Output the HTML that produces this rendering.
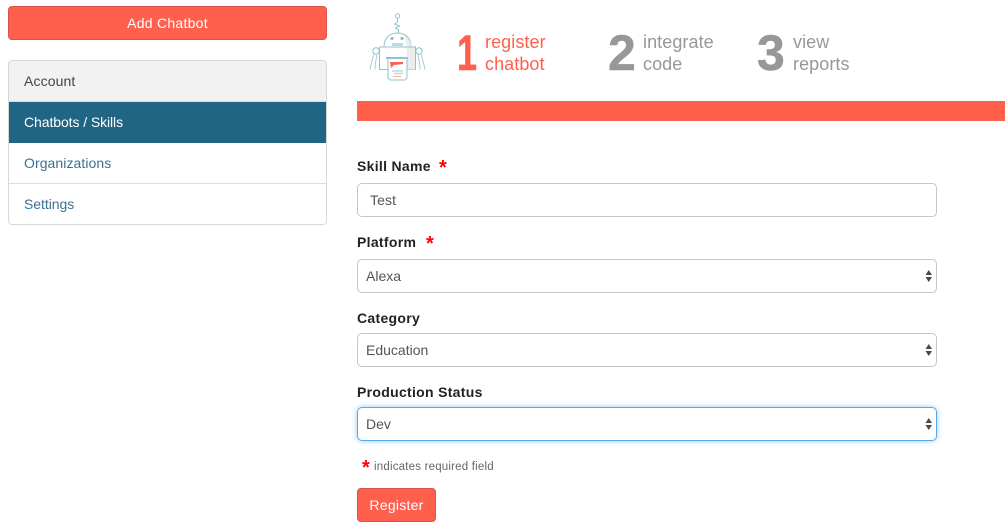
<!DOCTYPE html>
<html><head><meta charset="utf-8"><style>
html,body{margin:0;padding:0;background:#fff;width:1005px;height:531px;overflow:hidden}
body{position:relative;font-family:"Liberation Sans",sans-serif;font-size:14px;color:#333}
.a{position:absolute;white-space:nowrap;box-sizing:border-box}
.t{line-height:20px;height:20px}
.l{font-weight:bold;color:#222;letter-spacing:.3px}
.r{color:#f00;font-weight:bold;font-size:20px;line-height:20px}
.f{left:357px;width:580px;height:34px;border:1px solid #c6c6c6;border-radius:5px;background:#fff;padding-left:8px;line-height:32px;color:#555}
.n{font-weight:bold;font-size:50px;line-height:50px;color:#979797;-webkit-text-stroke:.5px currentColor}
.w{font-size:18px;line-height:21.5px;color:#979797;white-space:pre;letter-spacing:.08px}
</style></head><body>
<div class="a" style="left:8px;top:6px;width:319px;height:34px;background:#ff5f4d;border:1px solid #d9534a;border-radius:4px;color:#fff;text-align:center;line-height:32px;letter-spacing:.27px">Add Chatbot</div>
<div class="a" style="left:8px;top:60px;width:319px;height:165px;border:1px solid #d8d8d8;border-radius:4px;overflow:hidden;background:#fff">
<div class="a" style="left:0;top:0;width:317px;height:41px;background:#f2f2f2;border-bottom:1px solid #ddd;padding-left:15px;line-height:40px;color:#444;letter-spacing:.12px">Account</div>
<div class="a" style="left:0;top:41px;width:317px;height:41px;background:#206584;padding-left:15px;line-height:41px;color:#fff;letter-spacing:-.08px">Chatbots / Skills</div>
<div class="a" style="left:0;top:82px;width:317px;height:41px;border-bottom:1px solid #ddd;padding-left:15px;line-height:40px;color:#3a7291;letter-spacing:.07px">Organizations</div>
<div class="a" style="left:0;top:123px;width:317px;height:40px;padding-left:15px;line-height:40px;color:#3a7291;letter-spacing:-.05px">Settings</div>
</div>
<svg class="a" style="left:357px;top:0" width="90" height="90" viewBox="0 0 90 90" fill="none" stroke="#8fc3cf" stroke-width="1">
<circle cx="40.500" cy="16" r="2.200"/>
<path d="M40.500 18v4l-3 2 5 2-4 2 3 2v3"/>
<path d="M27 47c0-9 5.500-14 13.500-14S54 38 54 47z" fill="#fff"/>
<path d="M47 35c4 2 7 6 7 12h-4z" fill="#ececec" stroke="none"/>
<circle cx="35" cy="38.500" r="1.500" fill="#7fb6c4" stroke="none"/>
<circle cx="45" cy="38.500" r="1.500" fill="#7fb6c4" stroke="none"/>
<rect x="35" y="43" width="11" height="3" fill="#bcdbe2" stroke="none"/>
<rect x="22.500" y="47" width="36" height="22.500" fill="#fff"/>
<rect x="50" y="47.500" width="8" height="22" fill="#ececec" stroke="none"/>
<circle cx="19" cy="51" r="3.200" fill="#fff"/><circle cx="62" cy="51" r="3.200" fill="#fff"/>
<path d="M17 54.500c-2 5-3 10-4 15M20 54.500c-1 5-2 10-2 15M61 54.500c1 5 2 10 2 15M64 54.500c2 5 3 10 4 15" stroke="#a5cdd6"/>
<path d="M31 58h19v20l-2 2H33l-2-2z" fill="#fff"/>
<path d="M29 58h22" stroke-width="2"/>
<path d="M33 62h13v2l-9 1-3 3z" fill="#ff5f4d" stroke="none"/>
<path d="M35 71h11M37 73.500h9" stroke="#bcdbe2" stroke-width="1.500"/>
<path d="M36 76.500h8" stroke="#f6b3a9"/>
</svg>
<div class="a n" style="left:457px;top:28px;color:#ff5f4d;transform:scaleX(.72);transform-origin:0 0">1</div>
<div class="a w" style="left:485px;top:32px;color:#ff5f4d">register
chatbot</div>
<div class="a n" style="left:608px;top:28px">2</div>
<div class="a w" style="left:643px;top:32px">integrate
code</div>
<div class="a n" style="left:757px;top:28px">3</div>
<div class="a w" style="left:793px;top:32px">view
reports</div>
<div class="a" style="left:357px;top:101px;width:648px;height:20px;background:#ff5f4d"></div>

<div class="a t l" style="left:357px;top:156px">Skill Name</div>
<div class="a r" style="left:439px;top:158px">*</div>
<div class="a f" style="top:183px;padding-left:12px;letter-spacing:.1px;line-height:33px">Test</div>
<div class="a t l" style="left:357px;top:232px">Platform</div>
<div class="a r" style="left:426px;top:234px">*</div>
<div class="a f" style="top:259px">Alexa</div>
<div class="a t l" style="left:357px;top:308px">Category</div>
<div class="a f" style="top:333px">Education</div>
<div class="a t l" style="left:357px;top:382px">Production Status</div>
<div class="a f" style="top:407px;border-color:#5aa9e6;box-shadow:0 0 6px rgba(82,168,236,.6)">Dev</div>
<svg class="a" style="left:924px;top:270px" width="10" height="162" viewBox="0 0 10 162" fill="#4a4a4a">
<path d="M1.500 5l3.250-5 3.250 5zM1.500 7h6.500l-3.250 5zM1.500 79l3.250-5 3.250 5zM1.500 81h6.500l-3.250 5zM1.500 153l3.250-5 3.250 5zM1.500 155h6.500l-3.250 5z"/>
</svg>
<div class="a r" style="left:362px;top:458px">*</div>
<div class="a t" style="left:374px;top:457px;font-size:11.500px;color:#666;letter-spacing:.2px">indicates required field</div>
<div class="a" style="left:357px;top:488px;width:79px;height:34px;background:#ff5f4d;border:1px solid #d9534a;border-radius:4px;color:#fff;text-align:center;line-height:32px;letter-spacing:.25px">Register</div>
</body></html>
